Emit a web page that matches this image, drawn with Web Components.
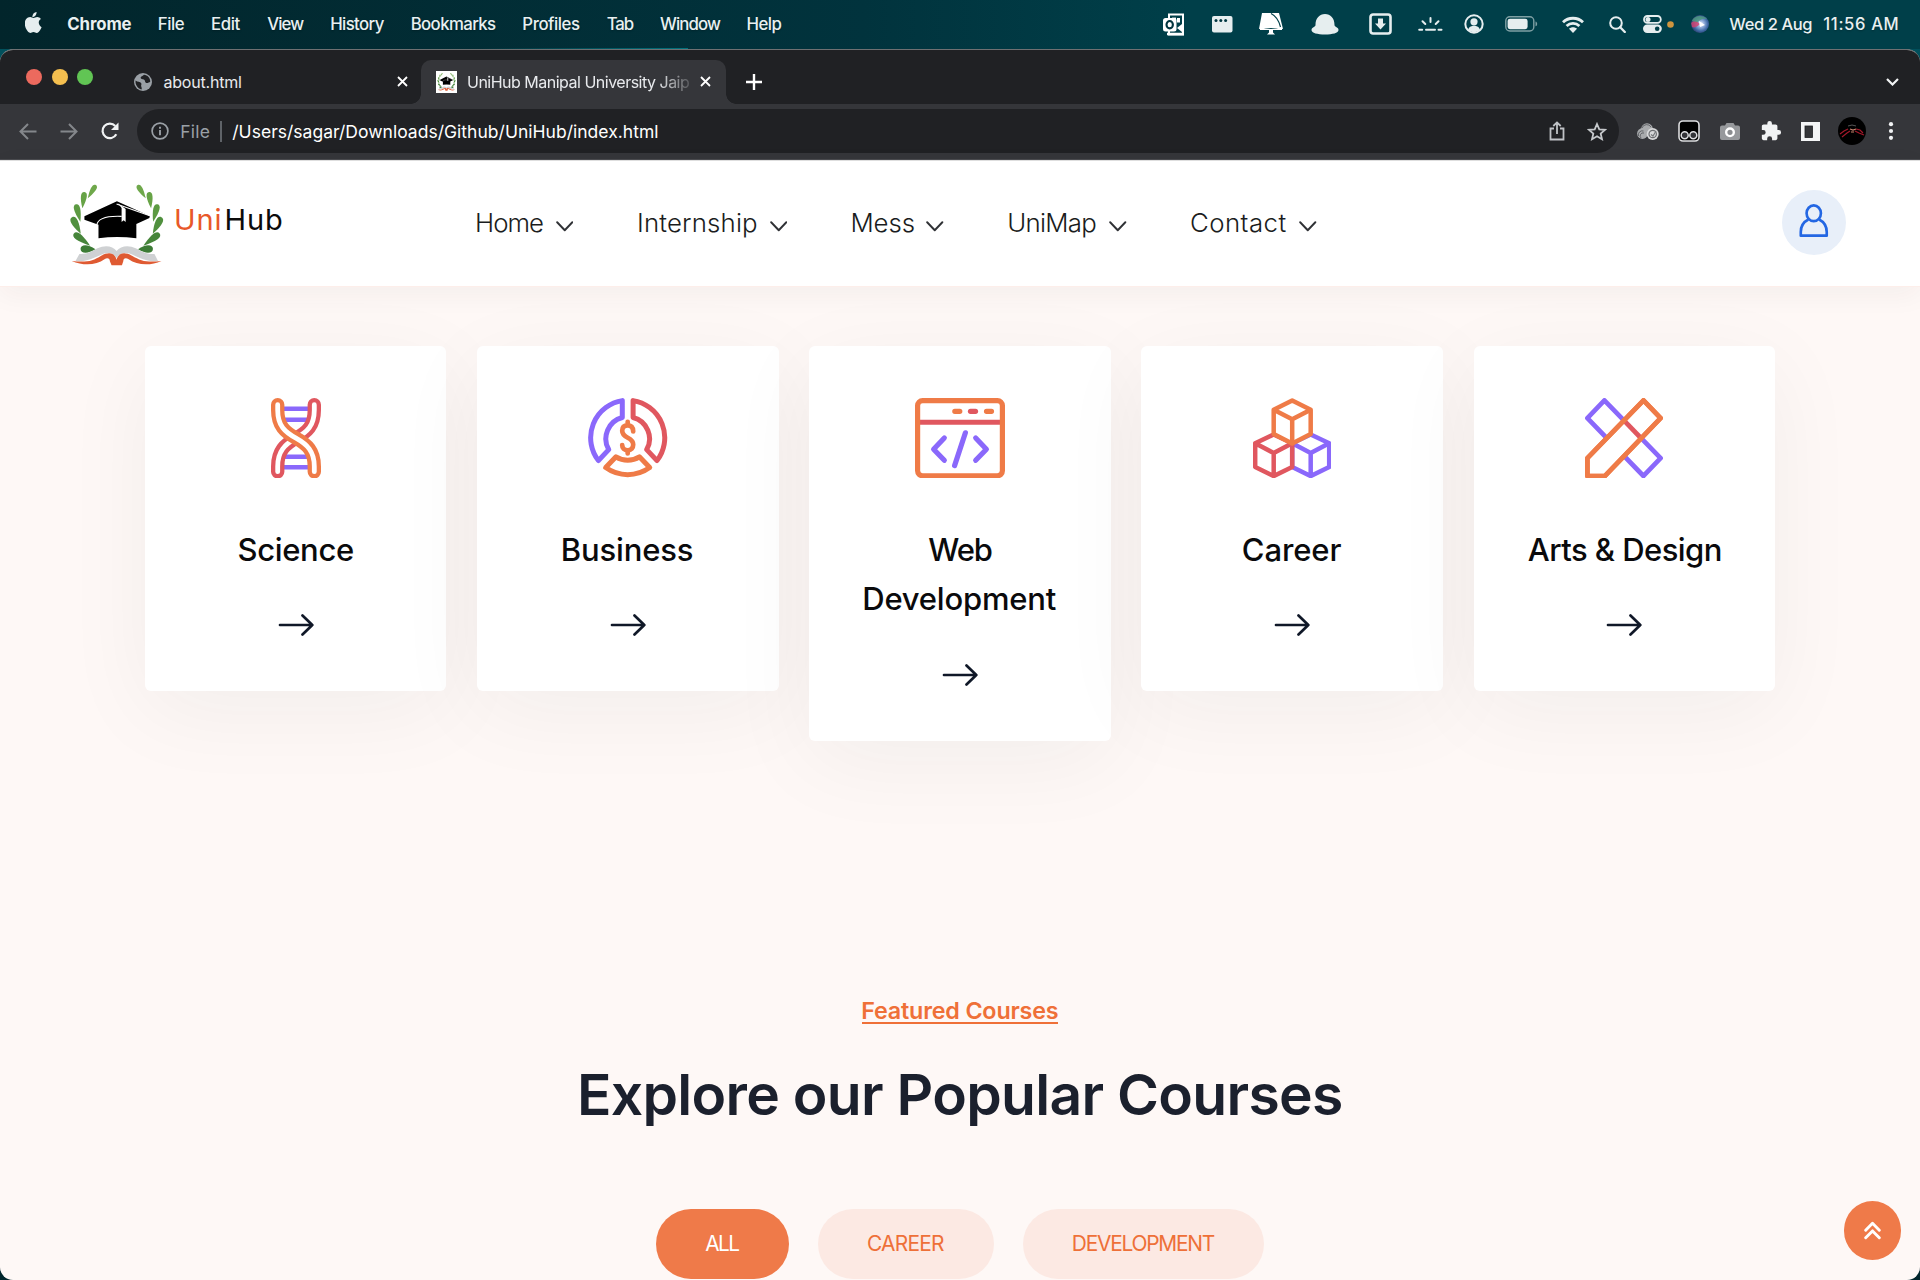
<!DOCTYPE html>
<html lang="en">
<head>
<meta charset="utf-8">
<title>UniHub Manipal University Jaipur</title>
<style>
html,body{margin:0;height:1280px;overflow:hidden;background:#01303a;font-family:Inter,"Liberation Sans",sans-serif}
</style>
</head>
<body>
<desktop-screen></desktop-screen>
<script>
/* Leaf of the laurel: a teardrop with its round head at (hx,hy) and its tip at (tx,ty). */
function leaf(hx,hy,tx,ty,r,fill){
  const a=Math.atan2(ty-hy,tx-hx)*180/Math.PI, d=Math.hypot(tx-hx,ty-hy);
  return `<path fill="${fill}" transform="translate(${hx} ${hy}) rotate(${a})" d="M${-r} 0C${-r} ${-r*1.25} ${r*.9} ${-r*1.35} ${d} 0C${r*.9} ${r*1.35} ${-r} ${r*1.25} ${-r} 0z"/>`;
}
const LEAVES=[[133,54,113,87,8,'#6fa84b'],[102,77,97,117,9,'#67a346'],[80,114,91,157,9.5,'#5c9a42'],[71,153,92,193,10.5,'#50903e'],[80,199,120,229,10.5,'#46853a'],[103,239,136,240,11.5,'#3c7b35']];
const laurel=LEAVES.map(l=>leaf(...l)).join('');
const LOGO=`${laurel}<g transform="translate(399 0) scale(-1 1)">${laurel}</g>
<path d="M103 141L200 96L298 140L297 146L258 164V207Q200 199 145 207V166L103 151z" fill="#000"/>
<path d="M140 168C142 148 165 139 214 141" fill="none" stroke="#fff" stroke-width="3.4"/>
<path d="M199 104L298 139" fill="none" stroke="#fff" stroke-width="3.2"/><path d="M203 102L226 119L226 158L220 153L214 158V116z" fill="#fff"/>
<path d="M76 276L88 254C110 256 125 246 142 237C165 226 188 230 199 245C210 230 235 226 256 237C275 247 290 256 312 254L323 276C290 278 268 266 250 258C228 246 210 250 199 266C188 250 172 246 150 258C130 266 110 278 76 276z" fill="#cfd1d3"/>
<path d="M65 275C110 280 128 275 153 259C178 246 194 252 199 271C204 252 220 246 245 259C272 275 290 280 333 275C300 290 260 288 235 270C225 264 219 268 219 276L215 288H184L179 276C179 268 172 264 163 270C138 288 100 290 65 275z" fill="#df5a32"/>`;
const O='#ef7b47',R='#e0575f',P='#8a68fb',M='#e6eeef';
const ICONS={
 apple:['0 0 17 21',`<path fill="${M}" d="M11.6 0c.1 1.3-.4 2.500-1.100 3.400-.8 1-2 1.600-3.100 1.500-.1-1.200.4-2.400 1.100-3.300C9.300.7 10.600.1 11.600 0zM16.600 15.300c-.5 1.200-.8 1.700-1.400 2.700-.9 1.400-2.100 2.900-3.500 2.900-1.300 0-1.700-.8-3.200-.8s-2 .8-3.200.8c-1.500 0-2.600-1.400-3.500-2.800C-.6 14.500-.9 9.900 1 7.300 2.100 5.700 3.800 5 5.100 5c1.500 0 2.400.9 3.500.9 1.200 0 1.900-.9 3.600-.9 1.300 0 2.700.7 3.700 1.900-3.200 1.800-2.700 6.400.7 8.400z"/>`],
 outlook:['0 0 22 23',`<path d="M6 1.500H20V21.500H6z" fill="none" stroke="#fff" stroke-width="2"/><path d="M9 5.500h4" stroke="#fff" stroke-width="1.800"/><path d="M15.500 5v4.500" stroke="#fff" stroke-width="3"/><path d="M14 15l5-4v8z" fill="#fff"/><rect x="0" y="5" width="13.500" height="13.500" rx="2.500" fill="#fff"/><ellipse cx="6.700" cy="11.700" rx="3.200" ry="3.700" fill="none" stroke="#01343e" stroke-width="2.100"/><path d="M4 21h17" stroke="#fff" stroke-width="2.500"/>`],
 cal:['0 0 21 17',`<rect width="20.500" height="16.500" rx="2" fill="${M}"/><g fill="#013741"><circle cx="4" cy="4.500" r="1.500"/><circle cx="8.800" cy="4.500" r="1.500"/><circle cx="13.600" cy="4.500" r="1.500"/></g>`],
 monitor:['0 0 24 22',`<path d="M3 0H20L24 16Q12 14 0 16z" fill="#fff"/><path d="M1 14Q12 18 23 14V17H1z" fill="#fff"/><path d="M10 16h4v3.500l2 2H8l2-2z" fill="#fff"/><path d="M12 .5Q19 4 21.500 14" stroke="#01404a" stroke-width="1.200" fill="none"/>`],
 hat:['0 0 28 21',`<path fill="${M}" d="M4.500 11C4.500 4 8.500 0 14 0s9.500 4 9.500 11c0 2 4 2 4 5 0 3-6 4.500-13.500 4.500S.500 19 .500 16c0-3 4-3 4-5z"/>`],
 down:['0 0 23 22',`<rect x="1.500" y="1.500" width="20" height="19" rx="2.500" fill="none" stroke="${M}" stroke-width="2.600"/><path d="M9 5.500h5v5h3L11.500 16.500 6 10.500H9z" fill="${M}"/>`],
 kbd:['0 0 25 14',`<path d="M1.200 12.700h3M8 12.700h9M20.500 12.700h3M12.500 1v4M4.500 4.200l2.800 2.800M20.500 4.200L17.700 7" stroke="${M}" stroke-width="2" stroke-linecap="round"/>`],
 person:['0 0 20 20',`<circle cx="10" cy="10" r="8.700" fill="none" stroke="${M}" stroke-width="2"/><circle cx="10" cy="7.800" r="3.600" fill="${M}"/><path d="M4 15.500c1.500-3 3.500-3.700 6-3.700s4.500.7 6 3.700c-3.500 3.500-8.500 3.500-12 0z" fill="${M}"/>`],
 battery:['0 0 33 16',`<rect x=".8" y=".8" width="28" height="14.200" rx="4" fill="none" stroke="#7fa0a4" stroke-width="1.400"/><rect x="2.600" y="2.700" width="20" height="10.500" rx="2.400" fill="${M}"/><path d="M30.500 5.500c2.200.6 2.200 4.200 0 4.800z" fill="#7fa0a4"/>`],
 wifi:['0 0 22 17',`<g fill="none" stroke="${M}" stroke-width="2.800"><path d="M1 6.300c5.500-5.400 14.500-5.400 20 0"/><path d="M4.600 10c3.600-3.500 9.200-3.500 12.800 0"/></g><path d="M7 12.800c2.400-2 5.600-2 8 0L11 17z" fill="${M}"/>`],
 search:['0 0 17 17',`<circle cx="7" cy="7" r="5.800" fill="none" stroke="${M}" stroke-width="2"/><path d="M11.200 11.200l4.600 4.800" stroke="${M}" stroke-width="2.300" stroke-linecap="round"/>`],
 control:['0 0 19 18',`<rect x="1" y="1" width="16.800" height="6.800" rx="3.400" fill="none" stroke="${M}" stroke-width="1.800"/><circle cx="5" cy="4.400" r="2.500" fill="${M}"/><rect y="9.500" width="18.800" height="8.500" rx="4.200" fill="${M}"/><circle cx="14.200" cy="13.700" r="2.300" fill="#01404a"/>`],
 dot:['0 0 7 7',`<circle cx="3.500" cy="3.500" r="3.300" fill="#cf953e"/>`],
 siri:['0 0 18 18',`<defs><radialGradient id="s" cx=".55" cy=".5" r=".55"><stop offset="0" stop-color="#fff"/><stop offset=".3" stop-color="#9db6e0"/><stop offset=".7" stop-color="#3f6aa6"/><stop offset="1" stop-color="#2a3d6b"/></radialGradient></defs><circle cx="9" cy="9" r="9" fill="url(#s)"/><path d="M1 6C3 1 11-1 16 4 12 3 8 5 6 8z" fill="#4d9a7c" opacity=".8"/><path d="M.2 8C2 6 6 6 9 9 6 12 3 13 1 12z" fill="#d6406e" opacity=".8"/><path d="M8 6l6 4-5 2z" fill="#fff"/>`],
 globe:['0 0 18 18',`<circle cx="9" cy="9" r="9" fill="#9aa0a6"/><path d="M1.600 7.500c2 1.800 4.500 1 5.500 2.600 1 1.500-.6 2.300.3 3.800.5.900.4 1.800.1 2.500C3.500 15.500 1 11.500 1.600 7.500zM10 1.800c-1 1.500-3.200 1.200-3.400 3 0 1.500 2 1.300 3.300 1.800 1.600.7.600 2.700 2.300 3.300 1.700.5 2.700-.8 4-1C16.500 5 13.500 2 10 1.800z" fill="#202124"/>`],
 close:['0 0 11 11','<path d="M1 1l9 9M10 1l-9 9" stroke="#fff" stroke-width="1.800"/>'],
 plus:['0 0 16 16','<path d="M8 0v16M0 8h16" stroke="#fff" stroke-width="2.400"/>'],
 tabchev:['0 0 13 8','<path d="M1 1l5.500 5.500L12 1" fill="none" stroke="#f1f3f4" stroke-width="2.200"/>'],
 back:['0 0 18 17','<path d="M17.500 8.500H1.800M9 1L1.500 8.500 9 16" fill="none" stroke="#84878b" stroke-width="2"/>'],
 fwd:['0 0 18 17','<path d="M.5 8.500h15.700M9 1l7.500 7.500L9 16" fill="none" stroke="#84878b" stroke-width="2"/>'],
 reload:['0 0 18 18','<path d="M15.300 12.300A7.300 7.300 0 1 1 14.300 4" fill="none" stroke="#f1f3f4" stroke-width="2.200"/><path d="M17.500.5V8H10z" fill="#f1f3f4"/>'],
 info:['0 0 18 18','<circle cx="9" cy="9" r="7.900" fill="none" stroke="#9aa0a6" stroke-width="1.700"/><path d="M9 8v5.200M9 4.700v2" stroke="#9aa0a6" stroke-width="1.900"/>'],
 share:['0 0 16 20','<path d="M5 7.500H1.500V18.500H14.500V7.500H11M8 13V1.800M4.300 5L8 1.400 11.700 5" fill="none" stroke="#bfc2c6" stroke-width="1.800"/>'],
 star:['0 0 20 19','<path d="M10 2l2.300 5.300 5.700.5-4.300 3.800 1.300 5.600L10 14.200l-5 3 1.300-5.600L2 7.800l5.700-.5z" fill="none" stroke="#c5c8cb" stroke-width="1.800"/>'],
 ext1:['0 0 22 17','<g fill="#a9abad"><circle cx="10" cy="6" r="5.800"/><circle cx="5.500" cy="10.500" r="5.400"/></g><path d="M1.500 13a4 4 0 0 1 5-5M4 15a3 3 0 0 1 3-5M5 5a5 5 0 0 1 9-1" stroke="#626468" fill="none"/><circle cx="15.700" cy="11" r="6" fill="#d8d9da"/><circle cx="15.700" cy="11" r="3.700" fill="none" stroke="#6d6f72" stroke-width="1.200"/><path d="M14 11.500l2 1.500 3-5" stroke="#77797c" fill="none" stroke-width="1.200"/>'],
 ext2:['0 0 22 22','<rect x="1" y="1" width="20" height="20" rx="4" fill="#000" stroke="#dcdddf" stroke-width="1.600"/><g fill="#333438" stroke="#dcdddf" stroke-width="1.500"><circle cx="6.700" cy="15.200" r="3.500"/><circle cx="15.300" cy="15.200" r="3.500"/></g>'],
 camera:['0 0 20 18','<path d="M2 3.500h3L6.500 1h7L15 3.500h3a2 2 0 0 1 2 2V16a2 2 0 0 1-2 2H2a2 2 0 0 1-2-2V5.500a2 2 0 0 1 2-2z" fill="#97999c"/><circle cx="10" cy="10.300" r="3.800" fill="#8b8d90" stroke="#fff" stroke-width="2.400"/>'],
 puzzle:['0 0 24 24','<path fill="#f1f3f4" d="M20.500 11H19V7c0-1.100-.9-2-2-2h-4V3.500a2.500 2.500 0 0 0-5 0V5H4c-1.100 0-2 .9-2 2v3.800h1.500a2.700 2.700 0 0 1 0 5.400H2V20c0 1.100.9 2 2 2h3.800v-1.500a2.700 2.700 0 0 1 5.400 0V22H17c1.100 0 2-.9 2-2v-4h1.500a2.500 2.500 0 0 0 0-5z"/>'],
 panel:['0 0 19 19','<rect width="19" height="19" fill="#f4f5f6"/><rect x="4" y="4" width="7.500" height="11.500" fill="#35363a" stroke="#202124" stroke-width=".8"/>'],
 avatar:['0 0 28 28','<circle cx="14" cy="14" r="14" fill="#000"/><path d="M2 17l4-3 4-2M4 20l5-4 3-2M17 14l4 2 5 2M18 12l4 1 3 3" fill="none" stroke="#a3182a" stroke-width="1.200"/><path d="M10 9l4-1 4 1" stroke="#555" fill="none"/><path d="M12 12l3 1 3-1M13 15h3" fill="none" stroke="#c9856f" stroke-width="1.200"/>'],
 dots:['0 0 6 18','<g fill="#f1f3f4"><circle cx="3" cy="2.200" r="2.100"/><circle cx="3" cy="9" r="2.100"/><circle cx="3" cy="15.800" r="2.100"/></g>'],
 logo:['60 44 279 247',LOGO],
 favicon:['40 20 320 300','<rect x="40" y="20" width="320" height="300" fill="#fff"/>'+LOGO],
 chev:['0 0 18 11','<path d="M1.200 1.200L9 9.200l7.800-8" fill="none" stroke="#303236" stroke-width="2" stroke-linecap="round" stroke-linejoin="round"/>'],
 user:['0 0 30 34','<g fill="none" stroke="#2467e3" stroke-width="2.700" stroke-linejoin="round"><ellipse cx="15" cy="9.300" rx="7.300" ry="7.900"/><path d="M9.500 15.500C4.500 18 1.800 22.500 1.800 28V31.700H28.200V28C28.200 22.500 25.500 18 20.500 15.500"/></g>'],
 arrow:['0 0 36 24','<path d="M2 12H34M24.500 2.500L34.300 12 24.500 21.500" fill="none" stroke="#101828" stroke-width="2.700" stroke-linecap="round" stroke-linejoin="round"/>'],
 up:['0 0 17 19','<path d="M1.700 9.200L8.500 2.300l6.800 6.900M1.700 16.800L8.500 9.900l6.800 6.900" fill="none" stroke="#fff" stroke-width="2.900" stroke-linecap="round" stroke-linejoin="round"/>'],
 dna:['0 0 50 80.400',`<path d="M12 10.700H38M14 21.700H36M14 58.700H36M12 69.300H38" stroke="${P}" stroke-width="4.400"/><g fill="none" stroke-linecap="round"><g transform="translate(50 0) scale(-1 1)"><path d="M6.700 6.700V12C6.700 28 14 34 25 40.200C36 46.400 43.300 53 43.300 68.400V73.700" stroke="${R}" stroke-width="13.400"/><path d="M6.700 6.700V12C6.700 28 14 34 25 40.200C36 46.400 43.300 53 43.300 68.400V73.700" stroke="#fff" stroke-width="4.800"/></g><path d="M6.700 6.700V12C6.700 28 14 34 25 40.200C36 46.400 43.300 53 43.300 68.400V73.700" stroke="${O}" stroke-width="13.400"/><path d="M6.700 6.700V12C6.700 28 14 34 25 40.200C36 46.400 43.300 53 43.300 68.400V73.700" stroke="#fff" stroke-width="4.800"/></g>`],
 business:['0 0 79.400 80.400',`<g fill="none" stroke-width="5" stroke-linejoin="round" stroke-linecap="round"><path stroke="${P}" d="M34.300 2.600A37.600 37.600 0 0 0 10.400 62.600L20.700 51.600A22 22 0 0 1 34.300 19.500z"/><path stroke="${R}" d="M45.100 2.600A37.600 37.600 0 0 1 69 62.600L58.700 51.600A22 22 0 0 0 45.100 19.500z"/><path stroke="${O}" d="M28 58.800A22 22 0 0 0 51.400 58.800L61.700 69.600A37.600 37.600 0 0 1 17.700 69.600z"/><path stroke="${O}" stroke-width="4.700" d="M45.200 33.500C45.200 29 43 27.300 39.700 27.300 36 27.300 34.200 29.500 34.200 32.800 34.200 41 45.200 38.500 45.200 46.500 45.200 50 43.300 52.300 39.700 52.300 36.300 52.300 34.200 50.300 34.200 47M39.700 23.800V27M39.700 52.500V55.500"/></g>`],
 web:['0 0 90 80.400',`<path d="M3 24.300H87" stroke="${R}" stroke-width="5"/><rect x="2.600" y="2.600" width="84.800" height="75.200" rx="5" fill="none" stroke="${O}" stroke-width="5.200"/><g stroke-width="5.200" stroke-linecap="round" fill="none" stroke-linejoin="round"><path d="M39.800 13.300h5M71.500 13.300h5" stroke="${O}"/><path d="M55.500 13.300h5" stroke="${R}"/><path stroke="${P}" d="M29.300 40L18.600 51.200 29.300 62.300M60.700 40L71.400 51.200 60.700 62.300M50.400 34.800L39.600 67.600"/></g>`],
 career:['0 0 78.400 80.400',`<g fill="none" stroke-width="4.500" stroke-linejoin="round"><path stroke="${P}" d="M57.700 36.500L76.200 45.300V69L57.700 78.100 39.200 69V45.300zM39.200 45.300L57.700 55 76.200 45.300M57.700 55V78"/><path stroke="${R}" d="M20.700 36.500L39.200 45.300V69L20.700 78.100 2.200 69V45.300zM2.200 45.300L20.700 55 39.200 45.300M20.700 55V78"/><path stroke="${O}" fill="#fff" d="M39.200 2.400L57.700 11.700V36L39.200 45.500 20.700 36V11.700z"/><path stroke="${O}" d="M20.700 11.700L39.200 21.200 57.700 11.700M39.200 21.200V45"/></g>`],
 arts:['0 0 78 80.400',`<g fill="none" stroke-width="4.700" stroke-linejoin="round"><path stroke="${P}" d="M19.400 2.400L2.400 20.200 58.500 78 75.600 60.200z"/><path fill="#fff" stroke="${O}" d="M58.500 2.400L75.600 20.200 20 78H2.400V60.200z"/><path stroke="${R}" d="M39.600 23.200L55.400 39.500"/><path stroke="${O}" d="M58.500 2.400L75.600 20.200 20 78H2.400V60.200z"/></g>`]
};
const define=(name,html)=>customElements.define(name,class extends HTMLElement{
  connectedCallback(){
    if(this.shadowRoot)return;
    this.attachShadow({mode:'open'}).innerHTML=typeof html==='function'?html(this):html;
  }
});

/* <ui-icon name w h ml>: one drawing from ICONS at a set size. */
define('ui-icon',el=>{
  const [vb,body]=ICONS[el.getAttribute('name')],w=el.getAttribute('w'),h=el.getAttribute('h');
  return `<style>:host{display:block;flex:none;width:${w}px;height:${h}px;margin-left:${el.getAttribute('ml')||0}px}svg{display:block;width:100%;height:100%}</style><svg viewBox="${vb}" preserveAspectRatio="none" aria-hidden="true">${body}</svg>`;
});

/* <fit-text w s wt ml>: one line tracked so that its visible ink spans exactly w pixels. */
const pen=document.createElement('canvas').getContext('2d');
define('fit-text',el=>{
  const s=+el.getAttribute('s'),wt=el.getAttribute('wt')||400,w=+el.getAttribute('w'),t=el.textContent;
  pen.font=`${wt} ${s}px Inter, "Liberation Sans", sans-serif`;
  const m=pen.measureText(t),ink=m.actualBoundingBoxLeft+m.actualBoundingBoxRight,ls=(w-ink)/Math.max(1,t.length-1);
  return `<style>:host{display:block;flex:none;white-space:nowrap;width:${w}px;margin-left:${el.getAttribute('ml')||0}px;font-size:${s}px;font-weight:${wt}}
  span{display:block;width:max-content;margin-left:${m.actualBoundingBoxLeft}px;letter-spacing:${ls}px}</style><span><slot></slot></span>`;
});

define('mac-menubar',`<style>:host{display:flex;align-items:center;height:49px;padding-bottom:1px;box-sizing:border-box;background:linear-gradient(90deg,transparent 480px,#01727d 688px,transparent 688px) 0 100%/100% 1px no-repeat,linear-gradient(90deg,#02252b,#01333d 45%,#003f49 62%,#003f49);color:#e9f0f1;line-height:24px;text-shadow:0 1px 2px rgba(0,0,0,.25)}</style>
<ui-icon name="apple" w="17" h="21" ml="25" style="position:relative;top:-1.500px"></ui-icon>
<fit-text w="64.300" s="16.800" wt="700" ml="25.300">Chrome</fit-text><fit-text w="26" s="16.800" wt="500" ml="27.100">File</fit-text>
<fit-text w="28.500" s="16.800" wt="500" ml="27.300">Edit</fit-text><fit-text w="37" s="16.800" wt="500" ml="26.700">View</fit-text>
<fit-text w="53.500" s="16.800" wt="500" ml="27">History</fit-text><fit-text w="84.400" s="16.800" wt="500" ml="27">Bookmarks</fit-text>
<fit-text w="56.600" s="16.800" wt="500" ml="27.300">Profiles</fit-text><fit-text w="27" s="16.800" wt="500" ml="26.800">Tab</fit-text>
<fit-text w="61" s="16.800" wt="500" ml="26.300">Window</fit-text><fit-text w="34" s="16.800" wt="500" ml="26.500">Help</fit-text>
<ui-icon name="outlook" w="22" h="23" ml="381.500"></ui-icon><ui-icon name="cal" w="21" h="17" ml="27.300"></ui-icon>
<ui-icon name="monitor" w="24" h="22" ml="25.500"></ui-icon><ui-icon name="hat" w="28" h="21" ml="28"></ui-icon>
<ui-icon name="down" w="23" h="22" ml="30.500"></ui-icon><ui-icon name="kbd" w="25" h="14" ml="26"></ui-icon>
<ui-icon name="person" w="20" h="20" ml="20.200"></ui-icon><ui-icon name="battery" w="33" h="16" ml="21.500"></ui-icon>
<ui-icon name="wifi" w="22" h="17" ml="23.800"></ui-icon><ui-icon name="search" w="17" h="17" ml="24.800"></ui-icon>
<ui-icon name="control" w="19" h="18" ml="17.800"></ui-icon><ui-icon name="dot" w="7" h="7" ml="4.600"></ui-icon>
<ui-icon name="siri" w="18" h="18" ml="16.500"></ui-icon>
<fit-text w="83" s="16.500" wt="500" ml="20.800">Wed 2 Aug</fit-text><fit-text w="74.300" s="16.600" wt="500" ml="11">11:56 AM</fit-text>`);

define('browser-tabs',`<style>:host{display:flex;height:53.500px;background:#202124;color:#e8eaed}
.row{display:flex;align-items:center;height:100%;line-height:24px}
.lights{display:flex;gap:9.500px;margin-left:26.200px;position:relative;top:.7px}.lights i{width:16px;height:16px;border-radius:50%}
.tab{display:flex;align-items:center;box-sizing:border-box;width:282px;height:44px;margin-top:9.500px;line-height:24px}
.on{background:#35363a;width:304.500px;border-radius:10px 10px 0 0;position:relative}
.on:before,.on:after{content:"";position:absolute;bottom:0;width:10px;height:10px}
.on:before{left:-10px;background:radial-gradient(circle at 0 0,transparent 9.500px,#35363a 10px)}
.on:after{right:-10px;background:radial-gradient(circle at 100% 0,transparent 9.500px,#35363a 10px)}
.fade{-webkit-mask:linear-gradient(90deg,#000 86%,rgba(0,0,0,.2));mask:linear-gradient(90deg,#000 86%,rgba(0,0,0,.2))}
.end{margin-left:auto;margin-right:21.500px}
.drop{margin-top:9.500px;height:44px}</style>
<div class="row"><div class="lights"><i style="background:#ec6a5e"></i><i style="background:#f4bf4f"></i><i style="background:#61c554"></i></div></div>
<div class="tab" style="margin-left:41.300px;width:287px"><ui-icon name="globe" w="18" h="18"></ui-icon><fit-text w="77.500" s="16" ml="11">about.html</fit-text><ui-icon name="close" w="11" h="11" ml="156.500"></ui-icon></div>
<div class="tab on"><ui-icon name="favicon" w="21" h="22" ml="15"></ui-icon><fit-text class="fade" w="221" s="16" ml="10.500">UniHub Manipal University Jaip</fit-text><ui-icon name="close" w="11" h="11" ml="11.500"></ui-icon></div>
<div class="row drop"><ui-icon name="plus" w="16" h="16" ml="20.500"></ui-icon></div>
<div class="row drop end"><ui-icon name="tabchev" w="13" h="8"></ui-icon></div>`);

define('browser-toolbar',`<style>:host{display:flex;align-items:center;height:56px;background:#35363a;box-sizing:border-box;border-bottom:1px solid #4a4b4f;line-height:25px}
.omni{display:flex;align-items:center;width:1482px;height:44px;border-radius:22px;background:#202124;margin-left:18.800px;color:#fff}
.omni i{width:1.500px;height:21px;background:#5f6368;margin-left:10.500px}.dim{color:#9aa0a6}</style>
<ui-icon name="back" w="18" h="17" ml="18.500"></ui-icon><ui-icon name="fwd" w="18" h="17" ml="23.500"></ui-icon><ui-icon name="reload" w="18" h="18" ml="22.700"></ui-icon>
<div class="omni"><ui-icon name="info" w="18" h="18" ml="13.500"></ui-icon><fit-text class="dim" w="28.500" s="17.500" ml="12.300">File</fit-text><i></i><fit-text w="425" s="17.500" ml="10.500">/Users/sagar/Downloads/Github/UniHub/index.html</fit-text>
<ui-icon name="share" w="16" h="20" ml="891.500"></ui-icon><ui-icon name="star" w="20" h="19" ml="22.600"></ui-icon></div>
<ui-icon name="ext1" w="22" h="17" ml="18"></ui-icon><ui-icon name="ext2" w="22" h="22" ml="18.700"></ui-icon><ui-icon name="camera" w="20" h="18" ml="19.500"></ui-icon>
<ui-icon name="puzzle" w="22" h="22" ml="20"></ui-icon><ui-icon name="panel" w="19" h="19" ml="19.500"></ui-icon><ui-icon name="avatar" w="28" h="28" ml="17.500"></ui-icon><ui-icon name="dots" w="6" h="18" ml="22.800"></ui-icon>`);

define('nav-item',el=>`<style>:host{display:flex;align-items:center;line-height:32px;color:#1a1c20}</style><fit-text w="${el.getAttribute('w')}" s="25.800" wt="300">${el.textContent}</fit-text><ui-icon name="chev" w="17.500" h="11" ml="12.800" style="position:relative;top:3.500px"></ui-icon>`);

define('site-header',`<style>:host{display:flex;align-items:center;height:126px;background:#fff;position:relative;z-index:2;box-sizing:border-box;border-top:1px solid #dedede;box-shadow:0 1px 0 #fdeeea,0 8px 26px rgba(60,40,30,.05)}
.brand{display:flex;align-items:center;margin-left:70px;line-height:36px;color:#0b0b0b}.brand fit-text{position:relative;top:-3.300px}
nav{display:flex;margin-left:195px}.user{margin-left:auto;margin-right:74px;width:64px;height:65px;border-radius:50%;background:#e8eff9;display:flex;align-items:center;justify-content:center;position:relative;top:-1px}
.user ui-icon{position:relative;top:-1.500px}</style>
<div class="brand"><ui-icon name="logo" w="93.500" h="82.300" style="position:relative;top:2.500px"></ui-icon><fit-text w="44.500" s="29" style="color:#e8582a" ml="12.500">Uni</fit-text><fit-text w="55.600" s="29" ml="6">Hub</fit-text></div>
<nav><nav-item w="66">Home</nav-item><nav-item w="118" style="margin-left:65.700px">Internship</nav-item><nav-item w="61.300" style="margin-left:65px">Mess</nav-item><nav-item w="87.200" style="margin-left:65.200px">UniMap</nav-item><nav-item w="95.500" style="margin-left:64.300px">Contact</nav-item></nav>
<div class="user"><ui-icon name="user" w="29.500" h="34"></ui-icon></div>`);

/* <category-card icon iw>: fit-text title lines are slotted. */
define('category-card',el=>`<style>:host{display:flex;flex-direction:column;align-items:center;box-sizing:border-box;width:301.500px;background:#fff;border-radius:6px;padding:52.300px 0 54px;box-shadow:0 20px 90px rgba(25,30,30,.05);color:#0a0a0c;line-height:49.700px}
.t{margin:46.500px 0 38.500px}</style><ui-icon name="${el.getAttribute('icon')}" w="${el.getAttribute('iw')}" h="80.400"></ui-icon><div class="t"><slot></slot></div><ui-icon name="arrow" w="36" h="24"></ui-icon>`);

define('category-row',`<style>:host{display:flex;justify-content:center;align-items:flex-start;gap:30.650px;padding-top:60px;height:395.700px}</style>
<category-card icon="dna" iw="50"><fit-text w="114.500" s="31" wt="500">Science</fit-text></category-card>
<category-card icon="business" iw="79.400"><fit-text w="130" s="31" wt="500">Business</fit-text></category-card>
<category-card icon="web" iw="90"><fit-text w="63.500" s="31" wt="500" style="margin:0 auto">Web</fit-text><fit-text w="191.500" s="31" wt="500">Development</fit-text></category-card>
<category-card icon="career" iw="78.400"><fit-text w="98.600" s="31" wt="500">Career</fit-text></category-card>
<category-card icon="arts" iw="78"><fit-text w="193" s="31" wt="500">Arts &amp; Design</fit-text></category-card>`);

define('filter-pill',`<style>:host{display:flex;align-items:center;justify-content:center;height:70px;border-radius:35px;background:#fce9e3;color:#ee7038;line-height:30px}:host([on]){background:#ef7a49;color:#fff}</style><div><slot></slot></div>`);

define('course-section',`<style>:host{display:flex;flex-direction:column;align-items:center;margin-top:255px}
.k{color:#ef7038;line-height:30px}.line{width:195.500px;height:2.200px;background:#ef7038;margin-top:-4.700px;margin-bottom:2.500px}
h2{margin:33.700px 0 79.300px;padding-left:2px;color:#1b202d;line-height:70px;font-weight:inherit}
.pills{display:flex;gap:29.500px}</style>
<fit-text class="k" w="195.500" s="23.300" wt="600">Featured Courses</fit-text><div class="line"></div>
<h2><fit-text w="760" s="57" wt="600">Explore our Popular Courses</fit-text></h2>
<div class="pills"><filter-pill on style="width:133px"><fit-text w="34" s="20.800">ALL</fit-text></filter-pill><filter-pill style="width:175.700px"><fit-text w="76" s="20.900">CAREER</fit-text></filter-pill><filter-pill style="width:241px"><fit-text w="142" s="20.900">DEVELOPMENT</fit-text></filter-pill></div>`);

define('scroll-top',`<style>:host{position:absolute;right:19px;bottom:20px;width:57.500px;height:58.500px;border-radius:50%;background:#ef7a49;display:flex;align-items:center;justify-content:center}</style><ui-icon name="up" w="17" h="19"></ui-icon>`);

define('browser-window',`<style>:host{display:block;position:relative;box-sizing:border-box;height:1230.500px;border-top:1.500px solid #6f7072;border-radius:13px;overflow:hidden;background:#fef8f6}</style>
<browser-tabs></browser-tabs><browser-toolbar></browser-toolbar><site-header></site-header><category-row></category-row><course-section></course-section><scroll-top></scroll-top>`);

define('desktop-screen',`<style>:host{display:block;height:1280px;overflow:hidden;background:linear-gradient(#01505c,#01505c) 0 0/100% 80px no-repeat,#01262d}</style><mac-menubar></mac-menubar><browser-window></browser-window>`);
</script>
</body>
</html>
